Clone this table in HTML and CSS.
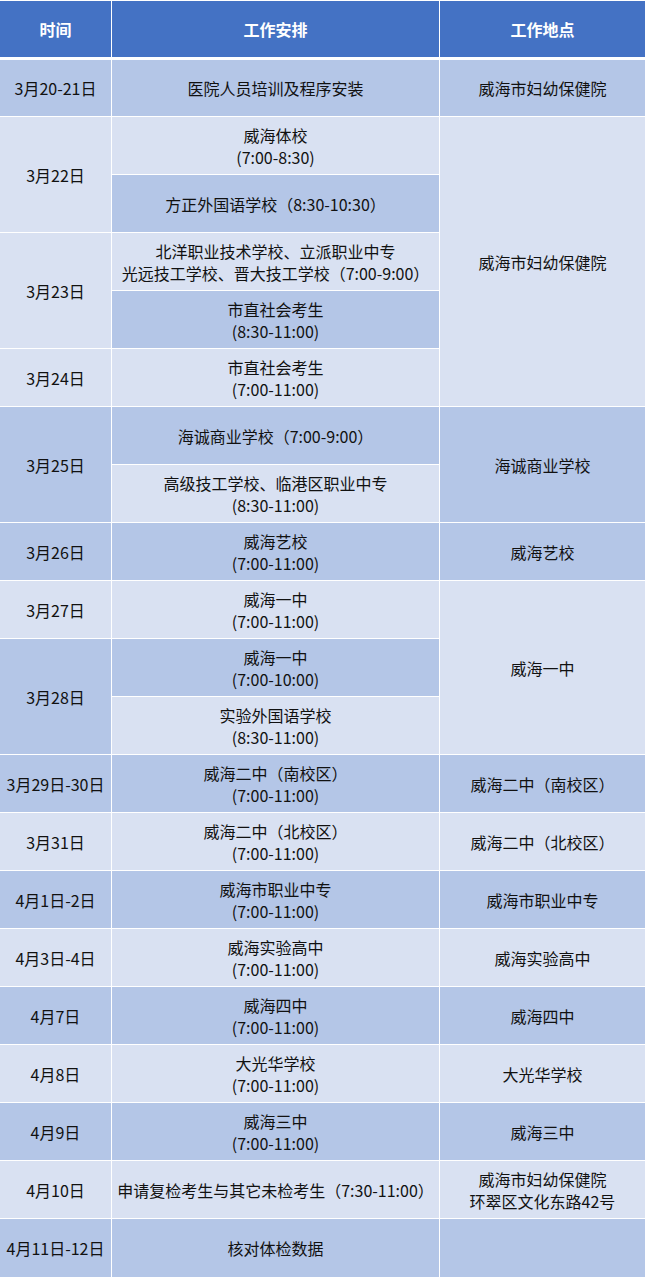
FILE: index.html
```html
<!DOCTYPE html>
<html lang="zh">
<head>
<meta charset="utf-8">
<title>工作安排</title>
<link rel="stylesheet" href="styles.css">
</head>
<body>
<table class="schedule">
  <colgroup>
    <col class="c-date">
    <col class="c-task">
    <col class="c-place">
  </colgroup>
  <thead>
    <tr class="head-row">
      <th class="first">时间</th>
      <th>工作安排</th>
      <th>工作地点</th>
    </tr>
  </thead>
  <tbody>
    <tr class="row top">
      <td class="first dark">3月20-21日</td>
      <td class="dark">医院人员培训及程序安装</td>
      <td class="dark">威海市妇幼保健院</td>
    </tr>
    <tr class="row">
      <td class="first light" rowspan="2">3月22日</td>
      <td class="light">威海体校<br>(7:00-8:30)</td>
      <td class="light" rowspan="5">威海市妇幼保健院</td>
    </tr>
    <tr class="row">
      <td class="dark">方正外国语学校（8:30-10:30）</td>
    </tr>
    <tr class="row">
      <td class="first light" rowspan="2">3月23日</td>
      <td class="light">北洋职业技术学校、立派职业中专<br>光远技工学校、晋大技工学校（7:00-9:00）</td>
    </tr>
    <tr class="row">
      <td class="dark">市直社会考生<br>(8:30-11:00)</td>
    </tr>
    <tr class="row">
      <td class="first light">3月24日</td>
      <td class="light">市直社会考生<br>(7:00-11:00)</td>
    </tr>
    <tr class="row">
      <td class="first dark" rowspan="2">3月25日</td>
      <td class="dark">海诚商业学校（7:00-9:00）</td>
      <td class="dark" rowspan="2">海诚商业学校</td>
    </tr>
    <tr class="row">
      <td class="light">高级技工学校、临港区职业中专<br>(8:30-11:00)</td>
    </tr>
    <tr class="row">
      <td class="first dark">3月26日</td>
      <td class="dark">威海艺校<br>(7:00-11:00)</td>
      <td class="dark">威海艺校</td>
    </tr>
    <tr class="row">
      <td class="first light">3月27日</td>
      <td class="light">威海一中<br>(7:00-11:00)</td>
      <td class="light" rowspan="3">威海一中</td>
    </tr>
    <tr class="row">
      <td class="first dark" rowspan="2">3月28日</td>
      <td class="dark">威海一中<br>(7:00-10:00)</td>
    </tr>
    <tr class="row">
      <td class="light">实验外国语学校<br>(8:30-11:00)</td>
    </tr>
    <tr class="row">
      <td class="first dark">3月29日-30日</td>
      <td class="dark">威海二中（南校区）<br>(7:00-11:00)</td>
      <td class="dark">威海二中（南校区）</td>
    </tr>
    <tr class="row">
      <td class="first light">3月31日</td>
      <td class="light">威海二中（北校区）<br>(7:00-11:00)</td>
      <td class="light">威海二中（北校区）</td>
    </tr>
    <tr class="row">
      <td class="first dark">4月1日-2日</td>
      <td class="dark">威海市职业中专<br>(7:00-11:00)</td>
      <td class="dark">威海市职业中专</td>
    </tr>
    <tr class="row">
      <td class="first light">4月3日-4日</td>
      <td class="light">威海实验高中<br>(7:00-11:00)</td>
      <td class="light">威海实验高中</td>
    </tr>
    <tr class="row">
      <td class="first dark">4月7日</td>
      <td class="dark">威海四中<br>(7:00-11:00)</td>
      <td class="dark">威海四中</td>
    </tr>
    <tr class="row">
      <td class="first light">4月8日</td>
      <td class="light">大光华学校<br>(7:00-11:00)</td>
      <td class="light">大光华学校</td>
    </tr>
    <tr class="row">
      <td class="first dark">4月9日</td>
      <td class="dark">威海三中<br>(7:00-11:00)</td>
      <td class="dark">威海三中</td>
    </tr>
    <tr class="row">
      <td class="first light">4月10日</td>
      <td class="light">申请复检考生与其它未检考生（7:30-11:00）</td>
      <td class="light">威海市妇幼保健院<br>环翠区文化东路42号</td>
    </tr>
    <tr class="row last">
      <td class="first dark">4月11日-12日</td>
      <td class="dark">核对体检数据</td>
      <td class="dark"></td>
    </tr>
  </tbody>
</table>
</body>
</html>
```

FILE: styles.css
```css
html, body {
  margin: 0;
  padding: 0;
  background: #ffffff;
}

body {
  font-family: "Noto Sans CJK SC", "Microsoft YaHei", "Noto Sans", sans-serif;
  font-size: 16px;
  line-height: 22px;
  color: #111111;
}

.schedule {
  width: 645px;
  table-layout: fixed;
  border-collapse: separate;
  border-spacing: 0;
}

.c-date { width: 111px; }
.c-task { width: 328px; }
.c-place { width: 206px; }

.schedule th,
.schedule td {
  padding: 0;
  text-align: center;
  vertical-align: middle;
  border-top: 1px solid #ffffff;
  border-left: 1px solid #ffffff;
}

.schedule th.first,
.schedule td.first {
  border-left: 0;
}

.head-row {
  height: 57px;
}

.schedule th {
  background: #4472c4;
  color: #ffffff;
  font-weight: bold;
}

.row {
  height: 58px;
}

.row.top {
  height: 59px;
}

.row.top td {
  border-top-width: 3px;
}

.row.last {
  height: 59px;
}

.dark {
  background: #b4c6e7;
}

.light {
  background: #d9e1f2;
}
```
